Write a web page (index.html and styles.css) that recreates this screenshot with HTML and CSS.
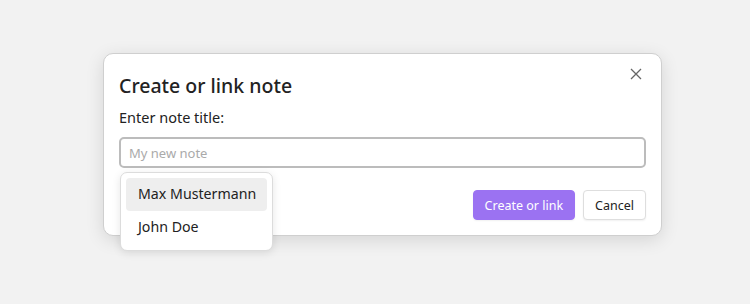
FILE: index.html
```html
<!DOCTYPE html>
<html lang="en">
<head>
  <meta charset="UTF-8" />
  <title>Create or link note</title>
  <link rel="stylesheet" href="styles.css">
</head>
<body>
  <div class="modal">
    <button class="close" aria-label="Close">
      <svg width="12" height="12" viewBox="0 0 12 12"><path d="M1 1L11 11M11 1L1 11" stroke="#666" stroke-width="1.3" fill="none"/></svg>
    </button>
    <h2 class="title">Create or link note</h2>
    <label class="label" for="noteTitle">Enter note title:</label>
    <div class="field">
      <input id="noteTitle" type="text" placeholder="My new note" autofocus />
      <ul class="suggest">
        <li class="item active">Max Mustermann</li>
        <li class="item">John Doe</li>
      </ul>
    </div>
    <div class="actions">
      <button class="btn primary">Create or link</button>
      <button class="btn">Cancel</button>
    </div>
  </div>
</body>
</html>
```

FILE: styles.css
```css
body {
  margin: 0;
  background: #f2f2f2;
  font-family: "Noto Sans", sans-serif;
  color: #222;
  height: 304px;
}
.modal {
  position: relative;
  box-sizing: border-box;
  width: 559px;
  height: 183px;
  margin: 53px 0 0 103px;
  padding: 18px 15px 0;
  background: #fff;
  border: 1px solid #cfcfcf;
  border-radius: 10px;
  box-shadow: 0 4px 18px rgba(0, 0, 0, 0.12);
}
.close {
  position: absolute;
  top: 14px;
  right: 19px;
  padding: 0;
  border: none;
  background: none;
  cursor: pointer;
}
.title {
  margin: 0 0 6px;
  font-size: 19.5px;
  font-weight: 500;
  line-height: 28px;
}
.label {
  display: block;
  font-size: 14.5px;
  line-height: 22px;
  margin-bottom: 9px;
}
.field {
  position: relative;
}
.field input {
  box-sizing: border-box;
  width: 527px;
  height: 31px;
  padding: 0 8px;
  border: 2px solid #bcbcbc;
  border-radius: 5px;
  font-family: inherit;
  font-size: 13px;
  color: #222;
  caret-color: #222;
  outline: none;
}
.field input::placeholder {
  color: #aaa;
}
.suggest {
  position: absolute;
  top: 35px;
  left: 1px;
  width: 153px;
  box-sizing: border-box;
  margin: 0;
  padding: 5px 5px 6px;
  list-style: none;
  background: #fff;
  border: 1px solid #dcdcdc;
  border-radius: 7px;
  box-shadow: 0 2px 8px rgba(0, 0, 0, 0.1);
  z-index: 2;
}
.item {
  padding: 0 12px;
  height: 33px;
  line-height: 31px;
  font-size: 14.2px;
  border-radius: 4px;
  white-space: nowrap;
}
.item.active {
  background: #eeeeee;
}
.actions {
  display: flex;
  justify-content: flex-end;
  gap: 8px;
  margin-top: 22px;
}
.btn {
  height: 30px;
  padding: 0 11px;
  font-family: inherit;
  font-size: 12.5px;
  color: #222;
  background: #fff;
  border: 1px solid #dedede;
  border-radius: 4px;
  box-shadow: 0 1px 2px rgba(0, 0, 0, 0.06);
  cursor: pointer;
}
.btn.primary {
  background: #9b72f2;
  border-color: #9b72f2;
  color: #fff;
}
```
